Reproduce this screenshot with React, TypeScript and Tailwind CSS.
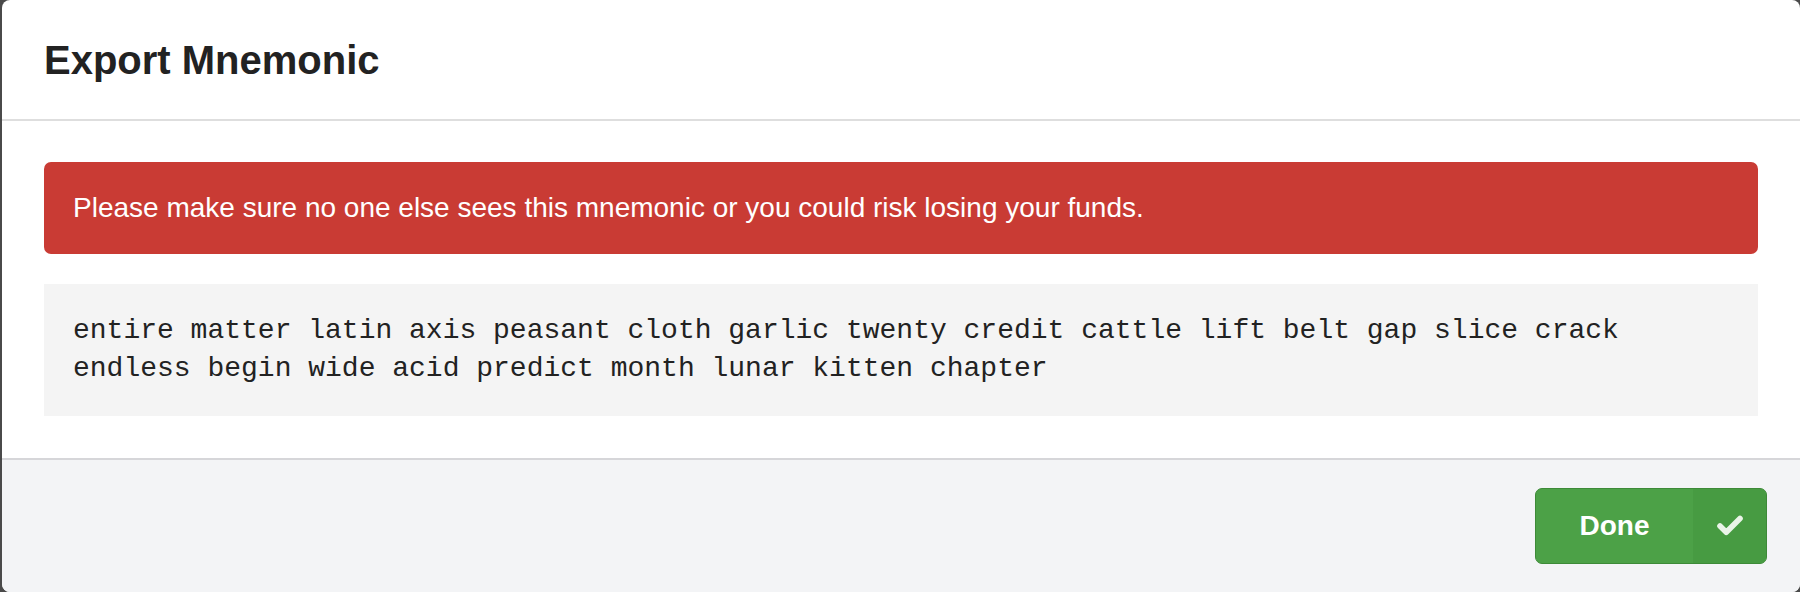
import { Check } from "lucide-react";

const words =
  "entire matter latin axis peasant cloth garlic twenty credit cattle lift belt gap slice crack endless begin wide acid predict month lunar kitten chapter";

const App = () => {
  return (
    <div className="h-[592px] w-[1800px] bg-[#4a4a4a] pl-[2px] overflow-hidden">
      <div className="flex h-full flex-col rounded-[8px] bg-white font-['Liberation_Sans',Arial,sans-serif] overflow-hidden">
        <div className="flex h-[121px] shrink-0 items-center border-b-2 border-[#dedede] px-[42px]">
          <h1 className="text-[40px] font-bold text-[#222]">Export Mnemonic</h1>
        </div>
        <div className="flex flex-col gap-[30px] px-[42px] pt-[41px] pb-[42px]">
          <div className="rounded-[7px] bg-[#c93b34] px-[29px] py-[29px] text-[28px] leading-[34px] text-white">
            Please make sure no one else sees this mnemonic or you could risk losing your funds.
          </div>
          <div className="bg-[#f4f4f4] px-[29px] py-[28px] font-['Liberation_Mono','Courier_New',monospace] text-[28px] leading-[38px] text-[#222]">
            {words}
          </div>
        </div>
        <div className="flex flex-1 items-center justify-end border-t-2 border-[#d6d6d9] bg-[#f3f4f6] pr-[33px]">
          <button className="flex h-[76px] items-stretch overflow-hidden rounded-[7px] border border-[#3d8a38] bg-[#4ca147] text-white">
            <span className="flex w-[157px] items-center justify-center text-[28px] font-bold">Done</span>
            <span className="flex w-[73px] items-center justify-center bg-[#479b42]">
              <Check size={30} strokeWidth={4.5} className="text-[#eaf4e8]" />
            </span>
          </button>
        </div>
      </div>
    </div>
  );
};

export default App;
